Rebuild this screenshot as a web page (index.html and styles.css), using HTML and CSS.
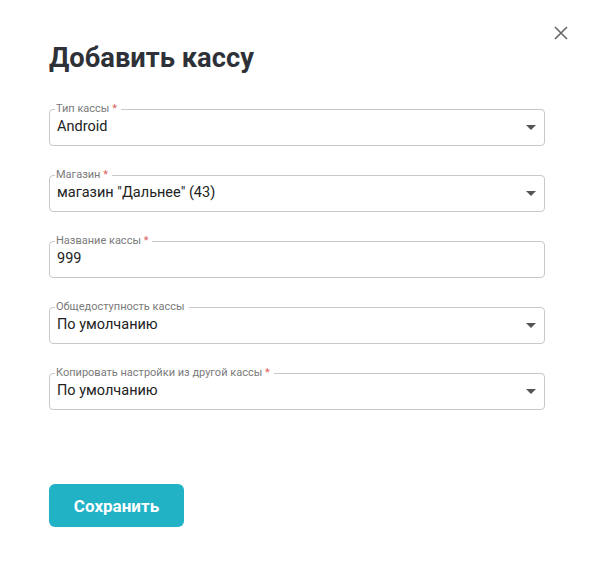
FILE: index.html
```html
<!DOCTYPE html>
<html lang="ru">
<head>
  <meta charset="UTF-8">
  <title>Добавить кассу</title>
  <link rel="stylesheet" href="styles.css">
</head>
<body>
  <div class="modal">
    <button class="close" aria-label="Закрыть">
      <svg width="14" height="14" viewBox="0 0 14 14"><path d="M1 1L13 13M13 1L1 13" stroke="#666" stroke-width="1.6"/></svg>
    </button>
    <h1 class="title">Добавить кассу</h1>

    <form class="form">
      <fieldset class="field">
        <legend>Тип кассы <span class="req">*</span></legend>
        <div class="value">Android<span class="arrow"></span></div>
      </fieldset>

      <fieldset class="field">
        <legend>Магазин <span class="req">*</span></legend>
        <div class="value">магазин "Дальнее" (43)<span class="arrow"></span></div>
      </fieldset>

      <fieldset class="field">
        <legend>Название кассы <span class="req">*</span></legend>
        <div class="value">999</div>
      </fieldset>

      <fieldset class="field">
        <legend>Общедоступность кассы</legend>
        <div class="value">По умолчанию<span class="arrow"></span></div>
      </fieldset>

      <fieldset class="field">
        <legend>Копировать настройки из другой кассы <span class="req">*</span></legend>
        <div class="value">По умолчанию<span class="arrow"></span></div>
      </fieldset>

      <div class="actions">
        <button type="button" class="save">Сохранить</button>
      </div>
    </form>
  </div>
</body>
</html>
```

FILE: styles.css
```css
body {
  margin: 0;
  background-color: #fff;
  font-family: Roboto, "Liberation Sans", sans-serif;
}

.modal {
  position: relative;
  width: 595px;
  height: 582px;
  box-sizing: border-box;
  padding: 38px 50px 0 49px;
}

.close {
  position: absolute;
  top: 26px;
  right: 27px;
  padding: 0;
  border: none;
  background: none;
  cursor: pointer;
}

.title {
  margin: 0 0 25px;
  font-size: 27.3px;
  font-weight: 700;
  line-height: 40px;
  color: #2e3238;
}

.form {
  display: flex;
  flex-direction: column;
  gap: 23px;
}

.field {
  margin: 0;
  padding: 0 8px 8px 7px;
  border: 1px solid #c8c8c8;
  border-radius: 4px;
  min-width: 0;
}

.field legend {
  padding: 0 4px 0 1px;
  margin-left: -2px;
  font-size: 11px;
  line-height: 12px;
  color: #7a7a7a;
}

.req {
  color: #e06060;
}

.value {
  position: relative;
  font-size: 14.5px;
  line-height: 20px;
  color: #222;
  margin-top: 2px;
}

.arrow {
  position: absolute;
  right: 0;
  top: 8px;
  width: 0;
  height: 0;
  border-left: 5px solid transparent;
  border-right: 5px solid transparent;
  border-top: 5px solid #555;
}

.actions {
  margin-top: 51px;
}

.save {
  width: 135px;
  height: 43px;
  border: none;
  border-radius: 6px;
  background-color: #21b2c6;
  color: #fff;
  font-family: Roboto, "Liberation Sans", sans-serif;
  font-size: 17px;
  font-weight: 700;
  cursor: pointer;
}
```
